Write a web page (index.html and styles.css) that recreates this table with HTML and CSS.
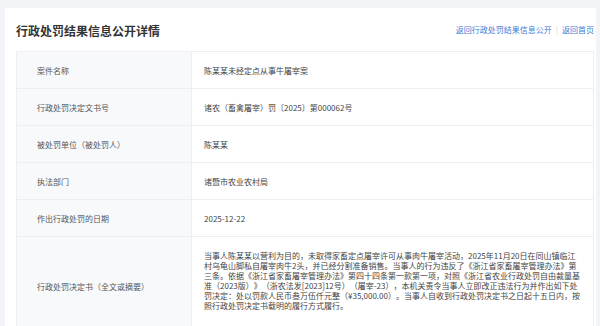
FILE: index.html
```html
<!DOCTYPE html>
<html lang="zh-CN">

<head>
    <meta charset="UTF-8" />
    <meta name="viewport" content="width=device-width, initial-scale=1.0" />
    <title>行政处罚结果信息公开详情</title>
    <link rel="stylesheet" href="styles.css">
</head>

<body>
    <div class="card">
        <div class="card-head">
            <h1>行政处罚结果信息公开详情</h1>
            <div class="links">
                <a href="#">返回行政处罚结果信息公开</a>
                <span class="sep">|</span>
                <a href="#">返回首页</a>
            </div>
        </div>

        <table class="detail">
            <colgroup>
                <col class="col-label">
                <col>
            </colgroup>
            <tr>
                <th>案件名称</th>
                <td>陈某某未经定点从事牛屠宰案</td>
            </tr>
            <tr>
                <th>行政处罚决定文书号</th>
                <td>诸农（畜禽屠宰）罚〔2025〕第000062号</td>
            </tr>
            <tr>
                <th>被处罚单位（被处罚人）</th>
                <td>陈某某</td>
            </tr>
            <tr>
                <th>执法部门</th>
                <td>诸暨市农业农村局</td>
            </tr>
            <tr>
                <th>作出行政处罚的日期</th>
                <td>2025-12-22</td>
            </tr>
            <tr class="long">
                <th>行政处罚决定书（全文或摘要）</th>
                <td>
                    <p>当事人陈某某以营利为目的，未取得家畜定点屠宰许可从事肉牛屠宰活动，2025年11月20日在同山镇临江村乌龟山脚私自屠宰肉牛2头，并已经分割准备销售。当事人的行为违反了《浙江省家畜屠宰管理办法》第三条。依据《浙江省家畜屠宰管理办法》第四十四条第一款第一项，对照《浙江省农业行政处罚自由裁量基准（2023版）》（浙农法发[2023]12号）（屠宰-23），本机关责令当事人立即改正违法行为并作出如下处罚决定：处以罚款人民币叁万伍仟元整（¥35,000.00）。当事人自收到行政处罚决定书之日起十五日内，按照行政处罚决定书载明的履行方式履行。</p>
                </td>
            </tr>
        </table>
    </div>
</body>

</html>
```

FILE: styles.css
```css
html,
body {
    margin: 0;
    background: #f3f4f7;
    font-family: "Noto Sans CJK SC", "Noto Sans", sans-serif;
}

.card {
    background: #fff;
    margin: 8px 4px 0 5px;
    padding: 0 2px 20px 11px;
}

.card-head {
    display: flex;
    align-items: center;
    justify-content: space-between;
    height: 43px;
}

.card-head h1 {
    margin: 0;
    padding-top: 2px;
    font-size: 12px;
    font-weight: 700;
    color: #333;
}

.links {
    display: flex;
    align-items: center;
    gap: 4px;
    font-size: 8px;
}

.links a {
    color: #3b7dd8;
    text-decoration: none;
}

.links .sep {
    color: #d5d8dd;
}

.detail {
    width: 100%;
    border-collapse: collapse;
    table-layout: fixed;
    font-size: 8px;
    text-spacing-trim: space-all;
}

.col-label {
    width: 175px;
}

.detail th,
.detail td {
    height: 36px;
    border: 1px solid #eceef1;
    text-align: left;
    vertical-align: middle;
    font-weight: 400;
}

.detail th {
    background: #f8f9fb;
    color: #555;
    padding: 0 12px 0 20px;
}

.detail td {
    color: #444;
    padding: 0 12px;
}

.detail .long td {
    padding: 14px 12px 24px;
}

.detail p {
    margin: 0;
    line-height: 10px;
}
```
